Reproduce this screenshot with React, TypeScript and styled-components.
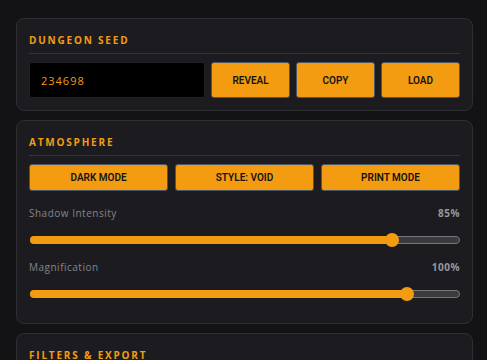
import styled, { createGlobalStyle } from 'styled-components';

const GlobalStyle = createGlobalStyle`
  html, body {
    margin: 0;
    padding: 0;
    background: #131315;
  }
  * {
    box-sizing: border-box;
  }
`;

const sliders = [
  { label: 'Shadow Intensity', value: '85%', pos: 0.857 },
  { label: 'Magnification', value: '100%', pos: 0.893 },
];

export default function App() {
  return (
    <Page>
      <GlobalStyle />
      <Card>
        <Title>Dungeon Seed</Title>
        <SeedRow>
          <SeedInput value="234698" readOnly />
          <ActionButton>REVEAL</ActionButton>
          <ActionButton>COPY</ActionButton>
          <ActionButton>LOAD</ActionButton>
        </SeedRow>
      </Card>
      <Card>
        <Title>Atmosphere</Title>
        <ModeRow>
          <ModeButton>DARK MODE</ModeButton>
          <ModeButton>STYLE: VOID</ModeButton>
          <ModeButton>PRINT MODE</ModeButton>
        </ModeRow>
        <Sliders>
          {sliders.map((s) => (
            <SliderGroup key={s.label}>
              <SliderHeader>
                <span>{s.label}</span>
                <b>{s.value}</b>
              </SliderHeader>
              <SliderBox>
                <Track>
                  <Fill style={{ width: `calc(7px + ${s.pos} * (100% - 14px))` }} />
                  <Thumb style={{ left: `calc(${s.pos} * (100% - 14px))` }} />
                </Track>
              </SliderBox>
            </SliderGroup>
          ))}
        </Sliders>
      </Card>
      <Card>
        <Title>Filters &amp; Export</Title>
      </Card>
    </Page>
  );
}

const Page = styled.div`
  display: flex;
  flex-direction: column;
  gap: 9px;
  padding: 18px 14px 18px 16px;
  font-family: 'Open Sans', 'Noto Sans', sans-serif;
`;

const Card = styled.section`
  background: #1c1c20;
  border: 1px solid #2e2e33;
  border-radius: 8px;
  padding: 12px;
`;

const Title = styled.h2`
  margin: 0;
  padding-bottom: 4px;
  border-bottom: 1px solid #34343a;
  color: #f39c12;
  font-family: 'Open Sans', 'Noto Sans', sans-serif;
  font-size: 10px;
  font-weight: 700;
  line-height: 18px;
  letter-spacing: 1.8px;
  text-transform: uppercase;
`;

const SeedRow = styled.div`
  display: grid;
  grid-template-columns: 1fr 79px 79px 79px;
  gap: 6px;
  margin-top: 8px;
  height: 36px;
`;

const SeedInput = styled.input`
  min-width: 0;
  background: #000;
  border: 1px solid #222226;
  border-radius: 3px;
  padding: 0 11px;
  color: #f39c12;
  font-family: 'Open Sans', 'Noto Sans', sans-serif;
  font-size: 11px;
  letter-spacing: 1px;
  outline: none;
`;

const ActionButton = styled.button`
  background: #f39c12;
  border: 1px solid #4b5563;
  border-radius: 3px;
  color: #141414;
  font-family: Roboto, 'Liberation Sans', sans-serif;
  font-size: 10px;
  font-weight: 600;
  padding: 0;
  cursor: pointer;
`;

const ModeRow = styled.div`
  display: grid;
  grid-template-columns: repeat(3, 1fr);
  gap: 7px;
  margin-top: 8px;
`;

const ModeButton = styled(ActionButton)`
  height: 27px;
`;

const Sliders = styled.div`
  display: flex;
  flex-direction: column;
  gap: 13px;
  margin-top: 15px;
  padding-bottom: 10px;
`;

const SliderGroup = styled.div`
  display: flex;
  flex-direction: column;
  gap: 12px;
`;

const SliderHeader = styled.div`
  display: flex;
  justify-content: space-between;
  font-size: 10px;
  line-height: 15px;
  letter-spacing: 0.5px;
  color: #85858b;
  b {
    color: #97979d;
    font-weight: 700;
  }
`;

const SliderBox = styled.div`
  height: 14px;
  display: flex;
  align-items: center;
`;

const Track = styled.div`
  position: relative;
  flex: 1;
  height: 8px;
  margin-left: 1px;
  background: #3b3b3e;
  border: 1px solid #77777b;
  border-radius: 4px;
`;

const Fill = styled.div`
  position: absolute;
  left: -1px;
  top: -1px;
  bottom: -1px;
  background: #f39c12;
  border-radius: 4px 0 0 4px;
`;

const Thumb = styled.div`
  position: absolute;
  top: 50%;
  width: 14px;
  height: 14px;
  margin-top: -7px;
  margin-left: -1px;
  border-radius: 50%;
  background: #f39c12;
`;
